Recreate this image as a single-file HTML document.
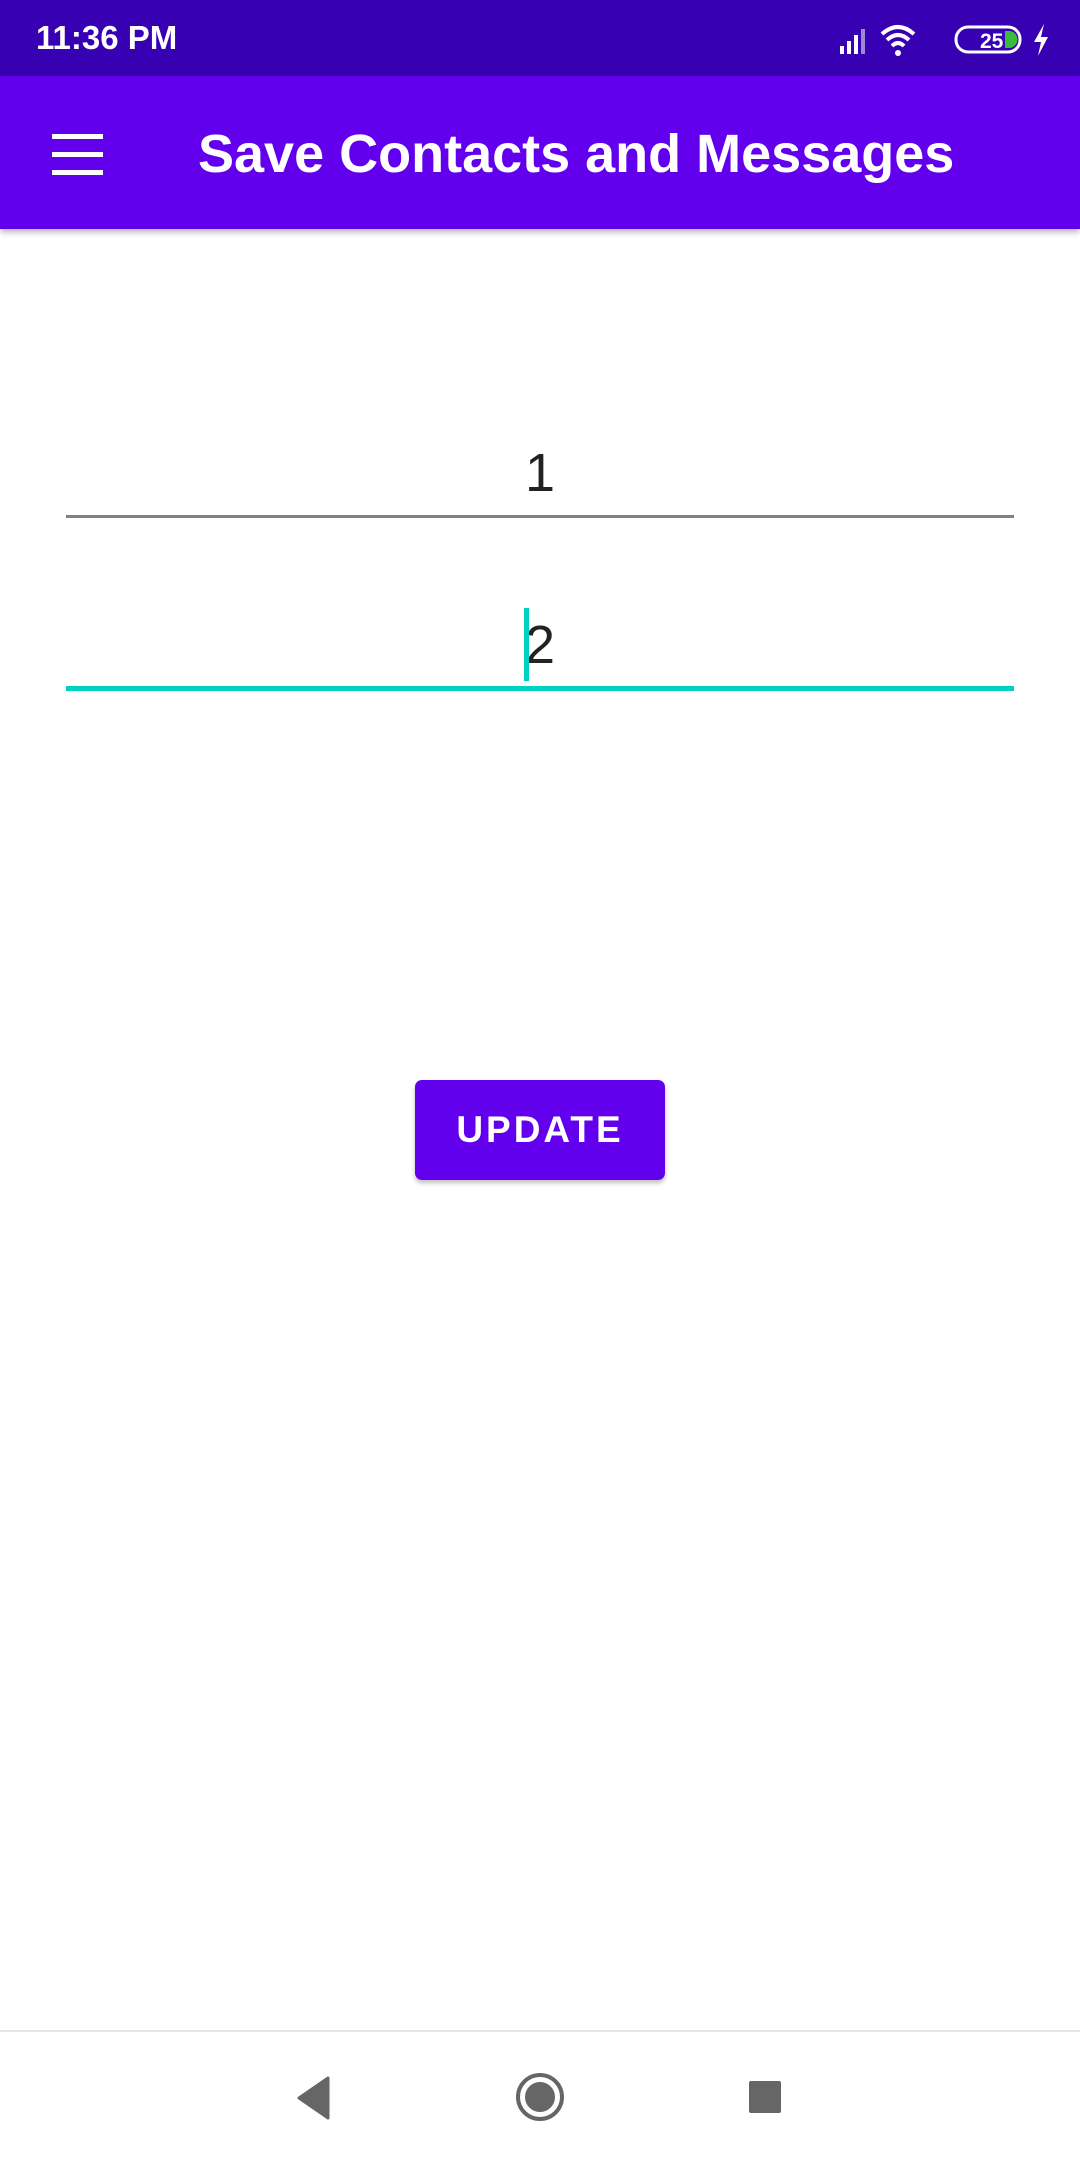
<!DOCTYPE html>
<html><head><meta charset="utf-8"><style>
body{margin:0;width:1080px;height:2160px;position:relative;background:#fff;font-family:"Liberation Sans",sans-serif;overflow:hidden}
.abs{position:absolute}
</style></head><body>
<div class="abs" style="left:0;top:0;width:1080px;height:76px;background:#3700b3"></div>
<div class="abs" style="left:36px;top:18px;color:#fff;font-size:33px;font-weight:bold;line-height:40px">11:36 PM</div>
<svg class="abs" style="left:838px;top:22px" width="220" height="36" viewBox="0 0 220 36">
 <rect x="2" y="24" width="4" height="8" fill="#fff"/><rect x="9" y="19" width="4" height="13" fill="#fff"/><rect x="16" y="13" width="4" height="19" fill="#fff"/><rect x="23" y="7" width="4" height="25" fill="#9a8ad0"/>
 <path d="M44 12 Q60 -2 76 12" stroke="#fff" stroke-width="4" fill="none"/><path d="M49 18 Q60 8 71 18" stroke="#fff" stroke-width="4" fill="none"/><path d="M54 24 Q60 18 66 24" stroke="#fff" stroke-width="4" fill="none"/><circle cx="60" cy="31" r="3" fill="#fff"/>
 <rect x="118" y="5" width="64" height="25" rx="12" stroke="#fff" stroke-width="3" fill="none"/>
 <path d="M167 9 h4 a8 8 0 0 1 0 17 h-4z" fill="#3cba3c"/>
 <text x="142" y="26" fill="#fff" font-size="21" font-weight="bold" font-family="Liberation Sans">25</text>
 <path d="M206 2 L196 20 h7 l-3 14 l10 -19 h-7z" fill="#fff"/>
</svg>
<div class="abs" style="left:0;top:76px;width:1080px;height:153px;background:#6200ee;box-shadow:0 3px 6px rgba(0,0,0,.3)"></div>
<div class="abs" style="left:52px;top:134px;width:51px;height:5px;background:#fff"></div>
<div class="abs" style="left:52px;top:152px;width:51px;height:5px;background:#fff"></div>
<div class="abs" style="left:52px;top:170px;width:51px;height:5px;background:#fff"></div>
<div class="abs" style="left:198px;top:124px;color:#fff;font-size:54px;font-weight:bold;line-height:60px;white-space:nowrap">Save Contacts and Messages</div>
<div class="abs" style="left:0;top:443px;width:1080px;text-align:center;font-size:54px;color:#222;line-height:60px">1</div>
<div class="abs" style="left:66px;top:515px;width:948px;height:3px;background:#808080"></div>
<div class="abs" style="left:0;top:615px;width:1080px;text-align:center;font-size:54px;color:#222;line-height:60px">2</div>
<div class="abs" style="left:524px;top:608px;width:5px;height:73px;background:#00d0c0"></div>
<div class="abs" style="left:66px;top:686px;width:948px;height:5px;background:#00d0c0"></div>
<div class="abs" style="left:415px;top:1080px;width:250px;height:100px;background:#6200ee;border-radius:7px;box-shadow:0 3px 5px rgba(0,0,0,.25);color:#fff;font-size:37px;font-weight:bold;letter-spacing:3px;text-align:center;line-height:100px">UPDATE</div>
<div class="abs" style="left:0;top:2030px;width:1080px;height:2px;background:#e6e6e6"></div>
<svg class="abs" style="left:0;top:2040px" width="1080" height="120">
 <path d="M328 38 L299 58 L328 78 Z" fill="#666" stroke="#666" stroke-width="3" stroke-linejoin="round"/>
 <circle cx="540" cy="57" r="22" fill="none" stroke="#666" stroke-width="4"/><circle cx="540" cy="57" r="15" fill="#666"/>
 <rect x="749" y="41" width="32" height="32" rx="2" fill="#666"/>
</svg>
</body></html>
